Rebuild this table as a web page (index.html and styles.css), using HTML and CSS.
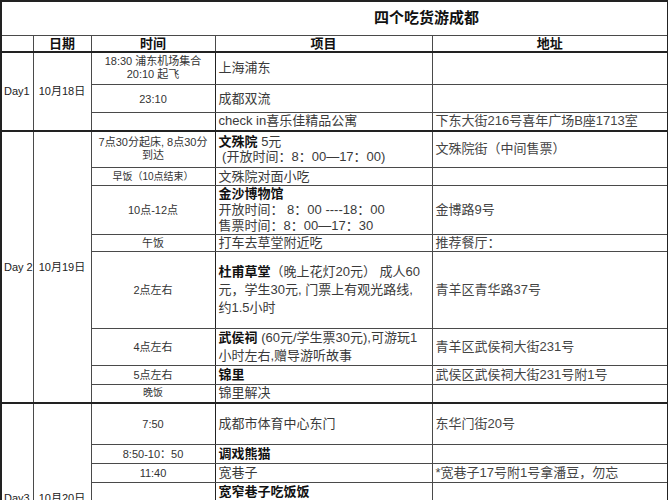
FILE: index.html
```html
<!DOCTYPE html>
<html lang="zh">
<head>
<meta charset="utf-8">
<title>四个吃货游成都</title>
<link rel="stylesheet" href="styles.css">
</head>
<body>
<table class="plan">
  <colgroup>
    <col class="c-day"><col class="c-date"><col class="c-time"><col class="c-item"><col class="c-addr">
  </colgroup>
  <tr class="r-title"><td colspan="5" class="title">四个吃货游成都</td></tr>
  <tr class="r-head"><th></th><th>日期</th><th>时间</th><th>项目</th><th>地址</th></tr>

  <tr class="grp h33">
    <td rowspan="3" class="day">Day1</td>
    <td rowspan="3" class="date">10月18日</td>
    <td class="time lh13">18:30 浦东机场集合<br>20:10 起飞</td>
    <td class="item">上海浦东</td>
    <td class="addr"></td>
  </tr>
  <tr class="h28"><td class="time">23:10</td><td class="item">成都双流</td><td class="addr"></td></tr>
  <tr class="h18"><td class="time"></td><td class="item">check in喜乐佳精品公寓</td><td class="addr">下东大街216号喜年广场B座1713室</td></tr>

  <tr class="grp h37">
    <td rowspan="8" class="day">Day 2</td>
    <td rowspan="8" class="date">10月19日</td>
    <td class="time lh13">7点30分起床, 8点30分<br>到达</td>
    <td class="item lh15"><strong>文殊院</strong> 5元<br>&nbsp;(开放时间：8：00—17：00)</td>
    <td class="addr">文殊院街（中间售票）</td>
  </tr>
  <tr class="h18"><td class="time small">早饭（10点结束）</td><td class="item">文殊院对面小吃</td><td class="addr"></td></tr>
  <tr class="h48"><td class="time">10点-12点</td><td class="item"><strong>金沙博物馆</strong><br>开放时间： 8：00 ----18：00<br>售票时间：8：00—17：30</td><td class="addr">金博路9号</td></tr>
  <tr class="h17"><td class="time">午饭</td><td class="item">打车去草堂附近吃</td><td class="addr">推荐餐厅：</td></tr>
  <tr class="h77"><td class="time">2点左右</td><td class="item lh18"><strong>杜甫草堂</strong>（晚上花灯20元） 成人60<br>元，学生30元, 门票上有观光路线,<br>约1.5小时</td><td class="addr">青羊区青华路37号</td></tr>
  <tr class="h37"><td class="time">4点左右</td><td class="item lh18"><strong>武侯祠</strong> (60元/学生票30元),可游玩1<br>小时左右,赠导游听故事</td><td class="addr">青羊区武侯祠大街231号</td></tr>
  <tr class="h19"><td class="time">5点左右</td><td class="item"><strong>锦里</strong></td><td class="addr">武侯区武侯祠大街231号附1号</td></tr>
  <tr class="h18"><td class="time small">晚饭</td><td class="item">锦里解决</td><td class="addr"></td></tr>

  <tr class="grp h42">
    <td rowspan="6" class="day">Day3</td>
    <td rowspan="6" class="date">10月20日</td>
    <td class="time">7:50</td>
    <td class="item">成都市体育中心东门</td>
    <td class="addr">东华门街20号</td>
  </tr>
  <tr class="h19"><td class="time">8:50-10：50</td><td class="item"><strong>调戏熊猫</strong></td><td class="addr"></td></tr>
  <tr class="h19"><td class="time">11:40</td><td class="item">宽巷子</td><td class="addr">*宽巷子17号附1号拿潘豆，勿忘</td></tr>
  <tr class="h19"><td class="time"></td><td class="item"><strong>宽窄巷子吃饭饭</strong></td><td class="addr"></td></tr>
  <tr class="h46"><td class="time"></td><td class="item"></td><td class="addr"></td></tr>
  <tr class="h46"><td class="time"></td><td class="item"></td><td class="addr"></td></tr>
</table>
</body>
</html>
```

FILE: styles.css
```css
html, body {
  margin: 0;
  padding: 0;
  overflow: hidden;
  background: #ffffff;
}

body {
  font-family: "Liberation Sans", "Noto Sans CJK SC", sans-serif;
  color: #3a3a3a;
}

.plan {
  border-collapse: collapse;
  table-layout: fixed;
  width: 667px;
  border: 2px solid #222;
}

.c-day { width: 32px; }
.c-date { width: 58px; }
.c-time { width: 124px; }
.c-item { width: 217px; }
.c-addr { width: 236px; }

.plan td,
.plan th {
  border: 1px solid #4a4a4a;
  padding: 0 3px;
  font-size: 13px;
  line-height: 16px;
  vertical-align: middle;
  white-space: nowrap;
  overflow: hidden;
}

.plan .title {
  border-left: 2px solid #222;
  border-right: 2px solid #222;
  padding-left: 372px;
  font-size: 15px;
  font-weight: bold;
  color: #111;
  text-align: left;
}

.r-title { height: 34px; }
.r-head { height: 16px; }

.plan th {
  font-size: 13px;
  font-weight: bold;
  color: #111;
  text-align: center;
  line-height: 15px;
}

.grp > td { border-top: 2px solid #222; }

.plan .day {
  font-size: 11px;
  color: #222;
  padding: 0 1px 0 2px;
  text-align: left;
}

.plan .date {
  font-size: 11px;
  color: #222;
  text-align: center;
  padding: 0;
}

.plan .time {
  font-size: 11px;
  color: #333;
  text-align: center;
  border-right: 1px solid #222;
}

.plan .time.small { font-size: 10px; }

.plan .item {
  padding-left: 3px;
  color: #3a3a3a;
}

.plan .addr {
  padding-left: 3px;
  color: #444;
  border-left: 1px solid #666;
}

.plan strong {
  color: #111;
  font-weight: bold;
}

.plan .lh13 { line-height: 13px; }
.plan .lh15 { line-height: 15px; }
.plan .lh18 { line-height: 18px; }

.h17 { height: 17px; }
.h18 { height: 18px; }
.h19 { height: 19px; }
.h28 { height: 28px; }
.h33 { height: 33px; }
.h37 { height: 37px; }
.h42 { height: 42px; }
.h46 { height: 46px; }
.h48 { height: 48px; }
.h77 { height: 77px; }
```
